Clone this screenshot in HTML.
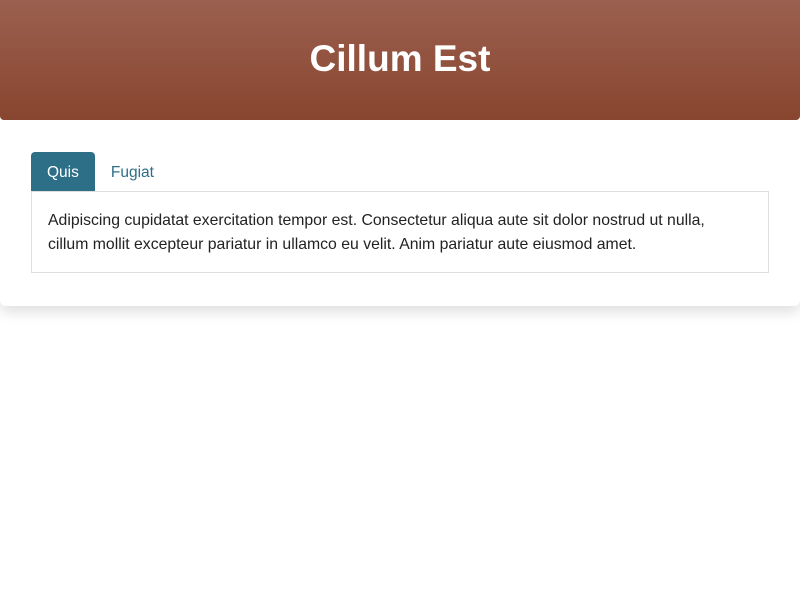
<!DOCTYPE html>
<html><head><style>
body{margin:0;width:800px;height:600px;background:#fff;font-family:"Liberation Sans",sans-serif;overflow:hidden}
.hdr{height:120px;background:linear-gradient(#9b604f,#88452f);border-radius:0 0 4px 4px;color:#fff;text-align:center;font-weight:bold;font-size:37px;line-height:118px;position:relative;z-index:2}
.card{position:absolute;top:120px;left:0;width:800px;height:186px;background:#fff;border-radius:0 0 6px 6px;box-shadow:0 6px 14px rgba(0,0,0,.13)}
.tabs{position:absolute;top:32px;left:31px;height:39px;display:flex}
.tab{height:39px;line-height:41px;padding:0 16px;font-size:15.5px;color:#2e6f88}
.tab.a{background:#2e6f88;color:#fff;border-radius:4px 4px 0 0}
.box{position:absolute;top:71px;left:31px;width:736px;height:80px;border:1px solid #dedede;box-sizing:content-box}
.box p{margin:0;padding:17px 16px;font-size:15.8px;line-height:24px;color:#222;white-space:nowrap}
</style></head><body>
<div class="hdr">Cillum Est</div>
<div class="card">
<div class="tabs"><div class="tab a">Quis</div><div class="tab">Fugiat</div></div>
<div class="box"><p>Adipiscing cupidatat exercitation tempor est. Consectetur aliqua aute sit dolor nostrud ut nulla,<br>cillum mollit excepteur pariatur in ullamco eu velit. Anim pariatur aute eiusmod amet.</p></div>
</div>
</body></html>
